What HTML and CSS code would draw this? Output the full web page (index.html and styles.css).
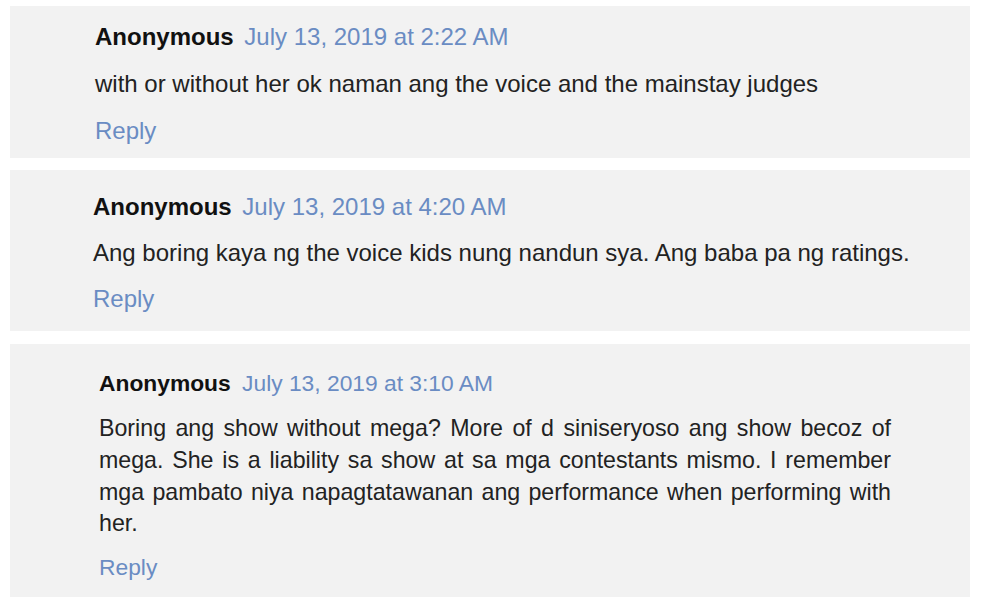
FILE: index.html
```html
<!DOCTYPE html>
<html lang="en">
  <head>
    <meta charset="UTF-8" />
    <meta name="viewport" content="width=device-width, initial-scale=1.0" />
    <title>Comments</title>
    <link rel="stylesheet" href="styles.css">
  </head>
  <body>
    <div class="comments">
      <div class="comment comment-first">
        <div class="comment-header">
          <span class="author">Anonymous</span>
          <a class="date" href="#">July 13, 2019 at 2:22 AM</a>
        </div>
        <p class="comment-content">with or without her ok naman ang the voice and the mainstay judges</p>
        <a class="reply" href="#">Reply</a>
      </div>

      <div class="comment comment-second">
        <div class="comment-header">
          <span class="author">Anonymous</span>
          <a class="date" href="#">July 13, 2019 at 4:20 AM</a>
        </div>
        <p class="comment-content">Ang boring kaya ng the voice kids nung nandun sya. Ang baba pa ng ratings.</p>
        <a class="reply" href="#">Reply</a>
      </div>

      <div class="comment comment-third">
        <div class="comment-header">
          <span class="author">Anonymous</span>
          <a class="date" href="#">July 13, 2019 at 3:10 AM</a>
        </div>
        <p class="comment-content">Boring ang show without mega? More of d siniseryoso ang show becoz of mega. She is a liability sa show at sa mga contestants mismo. I remember mga pambato niya napagtatawanan ang performance when performing with her.</p>
        <a class="reply" href="#">Reply</a>
      </div>
    </div>
  </body>
</html>
```

FILE: styles.css
```css
body {
  margin: 0;
  padding: 0;
  background-color: #fff;
  font-family: Arial, "Liberation Sans", sans-serif;
  color: #222;
}
.comments {
  width: 960px;
  padding: 6px 0 0 10px;
}
.comment {
  background-color: #f2f2f2;
  font-size: 24px;
  line-height: 47px;
}
.comment a {
  color: #6a8cc3;
  text-decoration: none;
}
.comment-header {
  white-space: nowrap;
}
.author {
  font-weight: bold;
  color: #111;
  margin-right: 4px;
}
.comment-content {
  margin: 0;
}
.reply {
  display: block;
  width: max-content;
}
.comment-first {
  padding: 7px 0 4px 85px;
  margin-bottom: 12px;
}
.comment-second {
  padding: 14px 0 9px 83px;
  line-height: 46px;
  margin-bottom: 13px;
}
.comment-third {
  padding: 16px 0 7px 89px;
  font-size: 22.8px;
  line-height: 46px;
}
.comment-third .author {
  margin-right: 5px;
}
.comment-third .comment-content {
  width: 792px;
  margin-top: 7px;
  margin-bottom: 4px;
  font-size: 23.2px;
  line-height: 31.8px;
  text-align: justify;
}
```
